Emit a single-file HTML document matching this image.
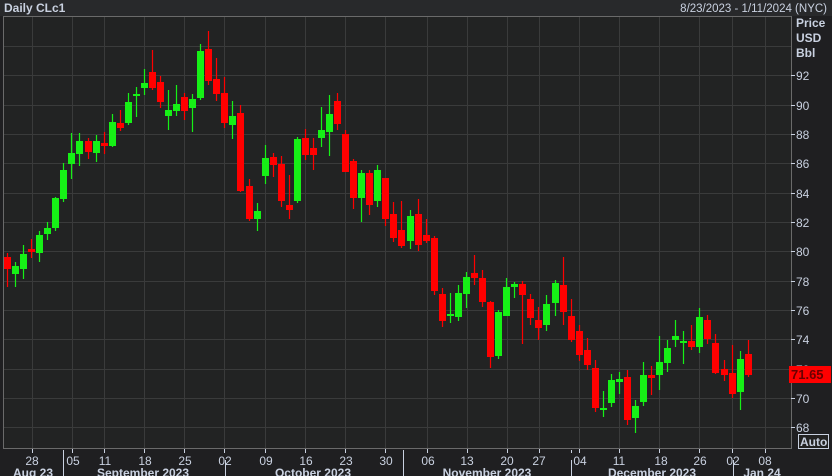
<!DOCTYPE html>
<html><head><meta charset="utf-8"><style>
html,body{margin:0;padding:0;background:#1f1f1f;}
svg{display:block;font-family:"Liberation Sans",sans-serif;}
</style></head><body>
<svg width="832" height="476" viewBox="0 0 832 476" xmlns="http://www.w3.org/2000/svg">
<rect x="0" y="0" width="832" height="476" fill="#1f1f21"/>
<rect x="0" y="0" width="832" height="16" fill="#28292b"/>
<rect x="3.5" y="16.5" width="788" height="432" fill="#222323" stroke="#6a6a6a" stroke-width="1"/>
<g stroke="#3a3b3b" stroke-width="1">
<path d="M4 46.5H791M4 75.5H791M4 105.5H791M4 134.5H791M4 163.5H791M4 193.5H791M4 222.5H791M4 251.5H791M4 281.5H791M4 310.5H791M4 339.5H791M4 369.5H791M4 398.5H791M4 427.5H791"/>
<path d="M32.5 17V448M72.5 17V448M104.5 17V448M144.5 17V448M184.5 17V448M224.5 17V448M265.5 17V448M305.5 17V448M345.5 17V448M385.5 17V448M427.5 17V448M467.5 17V448M507.5 17V448M539.5 17V448M579.5 17V448M619.5 17V448M659.5 17V448M699.5 17V448M732.5 17V448M765.5 17V448"/>
</g>
<path d="M791.5 16V449" stroke="#6a6a6a"/>
<g fill="#c9d1e0" font-size="12">
<text x="4" y="12" font-weight="bold">Daily CLc1</text>
<text x="827" y="12" text-anchor="end" font-size="11.5">8/23/2023 - 1/11/2024 (NYC)</text>
<text x="796" y="27" font-weight="bold">Price</text>
<text x="796" y="42" font-weight="bold">USD</text>
<text x="796" y="57" font-weight="bold">Bbl</text>
</g>
<g stroke="#c9d1e0" stroke-width="1">
<path d="M791 75.5h4M791 105.5h4M791 134.5h4M791 163.5h4M791 193.5h4M791 222.5h4M791 251.5h4M791 281.5h4M791 310.5h4M791 339.5h4M791 369.5h4M791 398.5h4M791 427.5h4"/>
</g>
<g fill="#c9d1e0" font-size="12">
<text x="796" y="80">92</text><text x="796" y="110">90</text><text x="796" y="139">88</text><text x="796" y="168">86</text><text x="796" y="198">84</text><text x="796" y="227">82</text><text x="796" y="256">80</text><text x="796" y="286">78</text><text x="796" y="315">76</text><text x="796" y="344">74</text><text x="796" y="374">72</text><text x="796" y="403">70</text><text x="796" y="432">68</text>
</g>
<rect x="789" y="366" width="42" height="17" fill="#ff0000"/>
<text x="791" y="379" font-size="13" font-weight="bold" fill="#6a0000">71.65</text>
<rect x="798.5" y="434.5" width="30" height="14" fill="#222" stroke="#c9d1e0"/>
<text x="800" y="446" font-size="12" font-weight="bold" fill="#c9d1e0">Auto</text>
<g stroke="#c9d1e0" stroke-width="1">
<path d="M32.5 449v4M72.5 449v4M104.5 449v4M144.5 449v4M184.5 449v4M224.5 449v4M265.5 449v4M305.5 449v4M345.5 449v4M385.5 449v4M427.5 449v4M467.5 449v4M507.5 449v4M539.5 449v4M579.5 449v4M619.5 449v4M659.5 449v4M699.5 449v4M732.5 449v4M765.5 449v4"/>
<path d="M63.5 450v26M225.5 460v16M403.5 450v26M571.5 460v16M733.5 460v16M63.5 450v3M403.5 450v3M571.5 450v3"/>
</g>
<g fill="#c9d1e0" font-size="12" text-anchor="middle">
<text x="32" y="465">28</text><text x="73" y="465">05</text><text x="105" y="465">11</text><text x="145" y="465">18</text><text x="185" y="465">25</text><text x="225" y="465">02</text><text x="266" y="465">09</text><text x="306" y="465">16</text><text x="346" y="465">23</text><text x="386" y="465">30</text><text x="428" y="465">06</text><text x="467" y="465">13</text><text x="507" y="465">20</text><text x="539" y="465">27</text><text x="580" y="465">04</text><text x="619" y="465">11</text><text x="661" y="465">18</text><text x="700" y="465">26</text><text x="733" y="465">02</text><text x="765" y="465">08</text>
</g>
<g fill="#c9d1e0" font-size="12" font-weight="bold" text-anchor="middle">
<text x="33" y="477">Aug 23</text><text x="143" y="477">September 2023</text><text x="313" y="477">October 2023</text><text x="487" y="477">November 2023</text><text x="652" y="477">December 2023</text><text x="762" y="477">Jan 24</text>
</g>
<!-- red candles -->
<g stroke="#ff0000" stroke-width="1.2">
<path d="M7.5 253V287M31.5 239V258M88.5 138V159M104.5 132V154M120.5 110V131M152.5 50V90M160.5 76V108M184.5 93V120M208.5 31V85M216.5 58V101M224.5 77V128M240.5 105V192M249.5 179V221M273.5 153V177M281.5 156V207M289.5 175V219M305.5 129V160M313.5 138V170M337.5 93V130M345.5 130V172M353.5 159V209M369.5 170V215M385.5 178V226M393.5 202V242M401.5 201V248M418.5 199V251M426.5 219V243M434.5 236V295M442.5 288V327M474.5 255V285M482.5 270V307M490.5 301V368M522.5 281V344M530.5 294V325M538.5 307V340M563.5 257V325M571.5 299V342M579.5 325V361M587.5 338V370M595.5 360V412M627.5 370V425M651.5 366V395M691.5 325V350M707.5 315V344M715.5 334V374M724.5 360V381M732.5 345V398M748.5 340V377"/>
</g>
<g fill="#ff0000">
<rect x="4" y="257" width="7" height="12"/><rect x="28" y="249" width="7" height="3"/><rect x="85" y="141" width="7" height="11"/><rect x="101" y="143" width="7" height="3"/><rect x="117" y="123" width="7" height="5"/><rect x="149" y="72" width="7" height="16"/><rect x="157" y="82" width="7" height="20"/><rect x="181" y="97" width="7" height="14"/><rect x="205" y="49" width="7" height="32"/><rect x="213" y="79" width="7" height="15"/><rect x="221" y="93" width="7" height="30"/><rect x="237" y="113" width="7" height="78"/><rect x="246" y="186" width="7" height="33"/><rect x="270" y="157" width="7" height="8"/><rect x="278" y="164" width="7" height="37"/><rect x="286" y="205" width="7" height="5"/><rect x="302" y="138" width="7" height="17"/><rect x="310" y="148" width="7" height="7"/><rect x="334" y="101" width="7" height="23"/><rect x="342" y="134" width="7" height="38"/><rect x="350" y="161" width="7" height="37"/><rect x="366" y="173" width="7" height="32"/><rect x="382" y="178" width="7" height="41"/><rect x="390" y="214" width="7" height="24"/><rect x="398" y="230" width="7" height="16"/><rect x="415" y="214" width="7" height="31"/><rect x="423" y="235" width="7" height="6"/><rect x="431" y="238" width="7" height="53"/><rect x="439" y="294" width="7" height="27"/><rect x="471" y="273" width="7" height="5"/><rect x="479" y="278" width="7" height="24"/><rect x="487" y="302" width="7" height="55"/><rect x="519" y="284" width="7" height="11"/><rect x="527" y="299" width="7" height="19"/><rect x="535" y="320" width="7" height="8"/><rect x="560" y="285" width="7" height="27"/><rect x="568" y="316" width="7" height="24"/><rect x="576" y="331" width="7" height="24"/><rect x="584" y="350" width="7" height="15"/><rect x="592" y="368" width="7" height="40"/><rect x="624" y="377" width="7" height="43"/><rect x="648" y="375" width="7" height="3"/><rect x="688" y="341" width="7" height="6"/><rect x="704" y="320" width="7" height="19"/><rect x="712" y="343" width="7" height="30"/><rect x="721" y="369" width="7" height="6"/><rect x="729" y="373" width="7" height="21"/><rect x="745" y="354" width="7" height="21"/>
</g>
<!-- green candles -->
<g stroke="#16f016" stroke-width="1.2">
<path d="M15.5 262V287M23.5 245V279M39.5 231V262M47.5 222V240M55.5 197V231M63.5 163V202M71.5 133V179M79.5 133V166M96.5 135V162M112.5 114V147M128.5 93V125M136.5 87V117M144.5 69V95M168.5 90V130M176.5 85V116M192.5 94V132M200.5 44V100M232.5 101V139M257.5 203V231M265.5 145V184M297.5 137V203M321.5 107V147M329.5 95V156M361.5 170V222M377.5 165V207M410.5 210V249M450.5 293V323M458.5 285V321M466.5 272V308M498.5 310V359M506.5 278V316M514.5 282V298M546.5 295V331M555.5 280V316M603.5 391V417M611.5 374V407M619.5 372V394M635.5 400V433M643.5 362V406M659.5 336V390M667.5 340V372M675.5 320V347M683.5 331V364M699.5 308V353M740.5 351V410"/>
</g>
<g fill="#16f016">
<rect x="12" y="266" width="7" height="8"/><rect x="20" y="254" width="7" height="15"/><rect x="36" y="235" width="7" height="18"/><rect x="44" y="228" width="7" height="6"/><rect x="52" y="198" width="7" height="30"/><rect x="60" y="170" width="7" height="29"/><rect x="68" y="153" width="7" height="11"/><rect x="76" y="141" width="7" height="13"/><rect x="93" y="141" width="7" height="12"/><rect x="109" y="122" width="7" height="24"/><rect x="125" y="102" width="7" height="21"/><rect x="133" y="94" width="7" height="2"/><rect x="141" y="83" width="7" height="5"/><rect x="165" y="110" width="7" height="6"/><rect x="173" y="104" width="7" height="7"/><rect x="189" y="99" width="7" height="9"/><rect x="197" y="51" width="7" height="47"/><rect x="229" y="116" width="7" height="9"/><rect x="254" y="211" width="7" height="8"/><rect x="262" y="158" width="7" height="18"/><rect x="294" y="139" width="7" height="62"/><rect x="318" y="130" width="7" height="8"/><rect x="326" y="114" width="7" height="18"/><rect x="358" y="173" width="7" height="25"/><rect x="374" y="170" width="7" height="31"/><rect x="407" y="216" width="7" height="25"/><rect x="447" y="314" width="7" height="2"/><rect x="455" y="293" width="7" height="24"/><rect x="463" y="277" width="7" height="17"/><rect x="495" y="312" width="7" height="44"/><rect x="503" y="287" width="7" height="29"/><rect x="511" y="284" width="7" height="3"/><rect x="543" y="304" width="7" height="21"/><rect x="552" y="283" width="7" height="20"/><rect x="600" y="408" width="7" height="2"/><rect x="608" y="380" width="7" height="23"/><rect x="616" y="379" width="7" height="3"/><rect x="632" y="406" width="7" height="12"/><rect x="640" y="375" width="7" height="27"/><rect x="656" y="362" width="7" height="13"/><rect x="664" y="348" width="7" height="15"/><rect x="672" y="336" width="7" height="4"/><rect x="680" y="341" width="7" height="2"/><rect x="696" y="317" width="7" height="30"/><rect x="737" y="359" width="7" height="33"/>
</g>
</svg>
</body></html>
